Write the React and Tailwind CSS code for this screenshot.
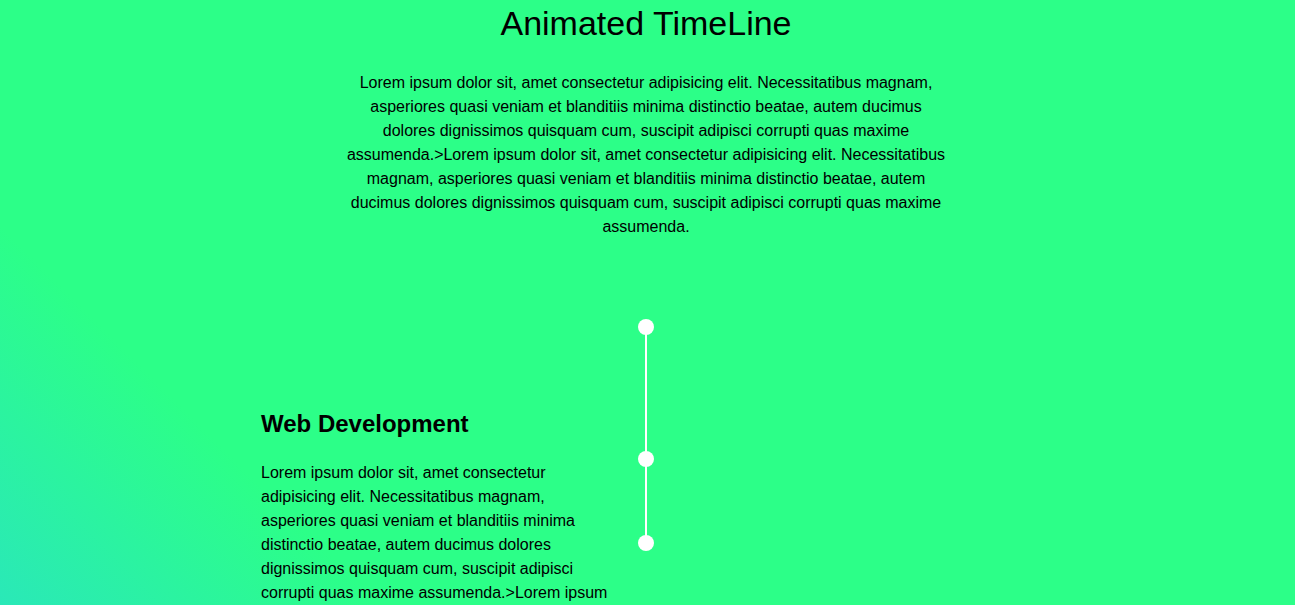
const lorem =
  'Lorem ipsum dolor sit, amet consectetur adipisicing elit. Necessitatibus magnam, asperiores quasi veniam et blanditiis minima distinctio beatae, autem ducimus dolores dignissimos quisquam cum, suscipit adipisci corrupti quas maxime assumenda.'

function Dot() {
  return <div className="relative z-10 w-4 h-4 rounded-full bg-white flex-shrink-0" />
}

function Segment({ h }) {
  return <div className={`w-[2px] bg-white -my-2 ${h}`} />
}

export default function App() {
  return (
    <div
      className="h-[605px] overflow-hidden pr-[3px] text-black bg-[linear-gradient(45deg,#2ae8b8_0%,#2cff88_20%)]"
      style={{ fontFamily: '"Liberation Sans", Arial, sans-serif' }}
    >
      {/* Header */}
      <h1 className="pt-[4px] text-center text-[34px] leading-[39px] font-normal">Animated TimeLine</h1>
      <p className="mt-[28px] w-[600px] mx-auto text-center text-base leading-6">
        {lorem}&gt;{lorem}
      </p>

      {/* Timeline */}
      <div className="mt-[80px] w-[770px] mx-auto grid grid-cols-[1fr_16px_1fr]">
        <div className="pt-[91px]">
          <div className="w-[355px]">
            <h2 className="text-2xl leading-[28px] font-bold">Web Development</h2>
            <p className="mt-[23px] text-base leading-6">
              {lorem}&gt;{lorem}
            </p>
          </div>
        </div>

        <div className="flex flex-col items-center">
          <Dot />
          <Segment h="h-[132px]" />
          <Dot />
          <Segment h="h-[84px]" />
          <Dot />
        </div>

        <div />
      </div>
    </div>
  )
}
